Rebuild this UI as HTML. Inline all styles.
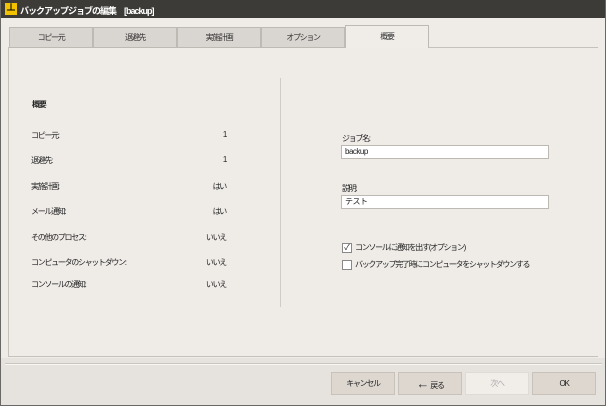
<!DOCTYPE html>
<html><head><meta charset="utf-8"><style>
*{margin:0;padding:0;box-sizing:border-box}
body{width:606px;height:406px;overflow:hidden;background:#e6e2dd;font-family:"Liberation Sans","Noto Sans CJK JP",sans-serif;font-size:8px;letter-spacing:-1.3px;color:#222;position:relative}
.win{position:absolute;left:0;top:0;width:606px;height:406px;border-left:1px solid #6a6864;border-bottom:1px solid #6a6864;border-right:1px solid #6a6864}
.title{position:absolute;left:0;top:0;width:606px;height:18px;background:#3d3b37;color:#fff;font-size:9px;font-weight:bold;letter-spacing:-1px}
.ico{position:absolute;left:5px;top:3px;width:12px;height:12px;background:#f2c200;color:#000;font-size:10px;line-height:12px;text-align:center;font-weight:bold;letter-spacing:0}
.tt{position:absolute;left:20px;top:4px}
.top{position:absolute;left:1px;top:18px;width:604px;height:340px;background:#efece7}
.tab{position:absolute;top:27px;height:21px;width:84px;background:#d9d5d0;border:1px solid #bdb9b3;text-align:center;line-height:19px;color:#333}
.tab.a{top:25px;height:23px;background:#f0ede9;border-bottom:none;line-height:21px}
.panel{position:absolute;left:8px;top:47px;width:590px;height:310px;background:#efece8;border:1px solid #c5c1bb;border-right:none}
.l{position:absolute;left:31px}
.v{position:absolute;right:380px;text-align:right}
.vline{position:absolute;left:280px;top:78px;width:1px;height:229px;background:#cfcbc6}
.inp{position:absolute;left:341px;width:208px;height:14px;background:#fff;border:1px solid #bcb8b2;padding-left:3px;line-height:12px;letter-spacing:-0.5px}
.cb{position:absolute;left:342px;width:10px;height:10px;border:1px solid #888;background:#fff;font-size:8px;line-height:8px;text-align:center;letter-spacing:0}
.sep{position:absolute;left:5px;top:363px;width:597px;height:2px;border-top:1px solid #c9c5bf;border-bottom:1px solid #f8f6f3}
.btn{position:absolute;top:372px;height:23px;width:64px;background:#ddd7d0;border:1px solid #c9c2ba;text-align:center;line-height:21px;color:#222}
</style></head><body>
<div class="top"></div>
<div class="title"><div class="ico">⊥</div><div class="tt">バックアップジョブの編集　[backup]</div></div>
<div class="panel"></div>
<div class="tab" style="left:9px">コピー元</div>
<div class="tab" style="left:93px">退避先</div>
<div class="tab" style="left:177px">実施計画</div>
<div class="tab" style="left:261px">オプション</div>
<div class="tab a" style="left:345px">概要</div>
<div style="position:absolute;left:32px;top:99px;font-weight:bold">概要</div>
<div class="l" style="top:130px">コピー元:</div><div class="v" style="top:130px">1</div>
<div class="l" style="top:155px">退避先:</div><div class="v" style="top:155px">1</div>
<div class="l" style="top:181px">実施計画:</div><div class="v" style="top:181px">はい</div>
<div class="l" style="top:206px">メール通知:</div><div class="v" style="top:206px">はい</div>
<div class="l" style="top:232px">その他のプロセス:</div><div class="v" style="top:232px">いいえ</div>
<div class="l" style="top:257px">コンピュータのシャットダウン:</div><div class="v" style="top:257px">いいえ</div>
<div class="l" style="top:279px">コンソールの通知:</div><div class="v" style="top:279px">いいえ</div>
<div class="vline"></div>
<div style="position:absolute;left:342px;top:133px">ジョブ名:</div>
<div class="inp" style="top:145px">backup</div>
<div style="position:absolute;left:342px;top:183px">説明:</div>
<div class="inp" style="top:195px">テスト</div>
<div class="cb" style="top:243px">✓</div><div style="position:absolute;left:355px;top:242px">コンソールに通知を出す(オプション)</div>
<div class="cb" style="top:260px"></div><div style="position:absolute;left:355px;top:259px">バックアップ完了時にコンピュータをシャットダウンする</div>
<div class="sep"></div>
<div class="btn" style="left:331px">キャンセル</div>
<div class="btn" style="left:398px"><span style="font-size:13px;font-weight:bold;color:#333;letter-spacing:0">←</span> 戻る</div>
<div class="btn" style="left:465px;background:#f1eeea;border-color:#dedad5;color:#aaa">次へ</div>
<div class="btn" style="left:532px">OK</div>
<div class="win"></div>
</body></html>
